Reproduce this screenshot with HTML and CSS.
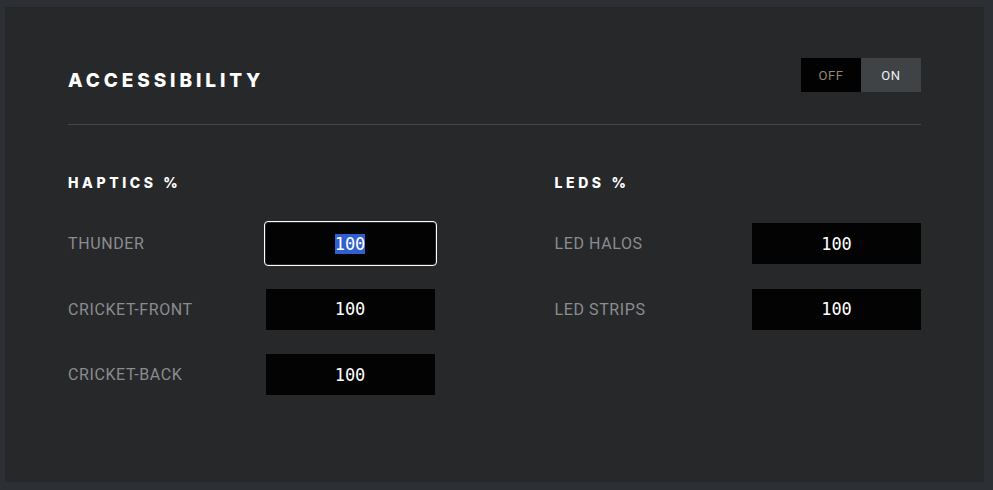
FILE: index.html
```html
<!DOCTYPE html>
<html lang="en">
<head>
    <meta charset="UTF-8">
    <meta name="viewport" content="width=device-width, initial-scale=1.0">
    <title>Accessibility</title>
    <link rel="stylesheet" href="styles.css">
</head>
<body>
    <div class="panel">
        <div class="panel-header">
            <h1>Accessibility</h1>
            <div class="toggle">
                <button class="toggle-btn off">OFF</button>
                <button class="toggle-btn on active">ON</button>
            </div>
        </div>

        <div class="columns">
            <div class="group">
                <h2>Haptics %</h2>
                <div class="row">
                    <label for="thunder">Thunder</label>
                    <input class="value focused" id="thunder" type="text" value="100">
                </div>
                <div class="row">
                    <label for="cricket-front">Cricket-Front</label>
                    <input class="value" id="cricket-front" type="text" value="100">
                </div>
                <div class="row">
                    <label for="cricket-back">Cricket-Back</label>
                    <input class="value" id="cricket-back" type="text" value="100">
                </div>
            </div>

            <div class="group">
                <h2>LEDs %</h2>
                <div class="row">
                    <label for="led-halos">LED Halos</label>
                    <input class="value" id="led-halos" type="text" value="100">
                </div>
                <div class="row">
                    <label for="led-strips">LED Strips</label>
                    <input class="value" id="led-strips" type="text" value="100">
                </div>
            </div>
        </div>
    </div>

    <script>
        // seleccionar el primer valor, como en la captura
        const thunder = document.getElementById('thunder');
        thunder.focus();
        thunder.select();
    </script>
</body>
</html>
```

FILE: styles.css
```css
* {
    margin: 0;
    padding: 0;
    box-sizing: border-box;
}

body {
    background: #2c2f33;
    font-family: 'Roboto', 'Liberation Sans', sans-serif;
}

.panel {
    margin: 7px 9px 8px 5px;
    height: 475px;
    background: #27282a;
    padding: 0 63px;
}

.panel-header {
    display: flex;
    justify-content: space-between;
    align-items: flex-start;
    height: 118px;
    padding-top: 51px;
    border-bottom: 1px solid #444649;
}

h1 {
    margin-top: 11px;
    font-family: 'Inter', sans-serif;
    font-weight: 800;
    font-size: 19px;
    line-height: 24px;
    letter-spacing: 3.9px;
    text-transform: uppercase;
    color: #ffffff;
}

.toggle {
    display: flex;
}

.toggle-btn {
    width: 60px;
    height: 34px;
    border: none;
    font-family: 'Roboto', sans-serif;
    font-size: 13px;
    letter-spacing: 0.6px;
    cursor: pointer;
}

.toggle-btn.off {
    background: #020202;
    color: #958671;
}

.toggle-btn.on {
    background: #404346;
    color: #eef0f4;
}

.columns {
    display: grid;
    grid-template-columns: 1fr 1fr;
    column-gap: 120px;
    padding-top: 48px;
}

h2 {
    font-family: 'Inter', sans-serif;
    font-weight: 800;
    font-size: 14px;
    line-height: 19px;
    letter-spacing: 3.6px;
    text-transform: uppercase;
    color: #ffffff;
    margin-bottom: 31px;
}

.row {
    display: flex;
    justify-content: space-between;
    align-items: center;
    height: 41px;
    margin-bottom: 24.5px;
}

label {
    font-size: 16px;
    text-transform: uppercase;
    letter-spacing: 0.6px;
    color: #8a8c90;
}

.value {
    width: 169px;
    height: 41px;
    border: none;
    background: #030303;
    color: #ffffff;
    text-align: center;
    font-family: 'DejaVu Sans Mono', monospace;
    font-size: 17px;
    outline: none;
}

.value.focused {
    outline: 1px solid #ffffff;
    outline-offset: 1px;
    border-radius: 2px;
}

.value::selection {
    background: #2f5fd0;
    color: #ffffff;
}
```
